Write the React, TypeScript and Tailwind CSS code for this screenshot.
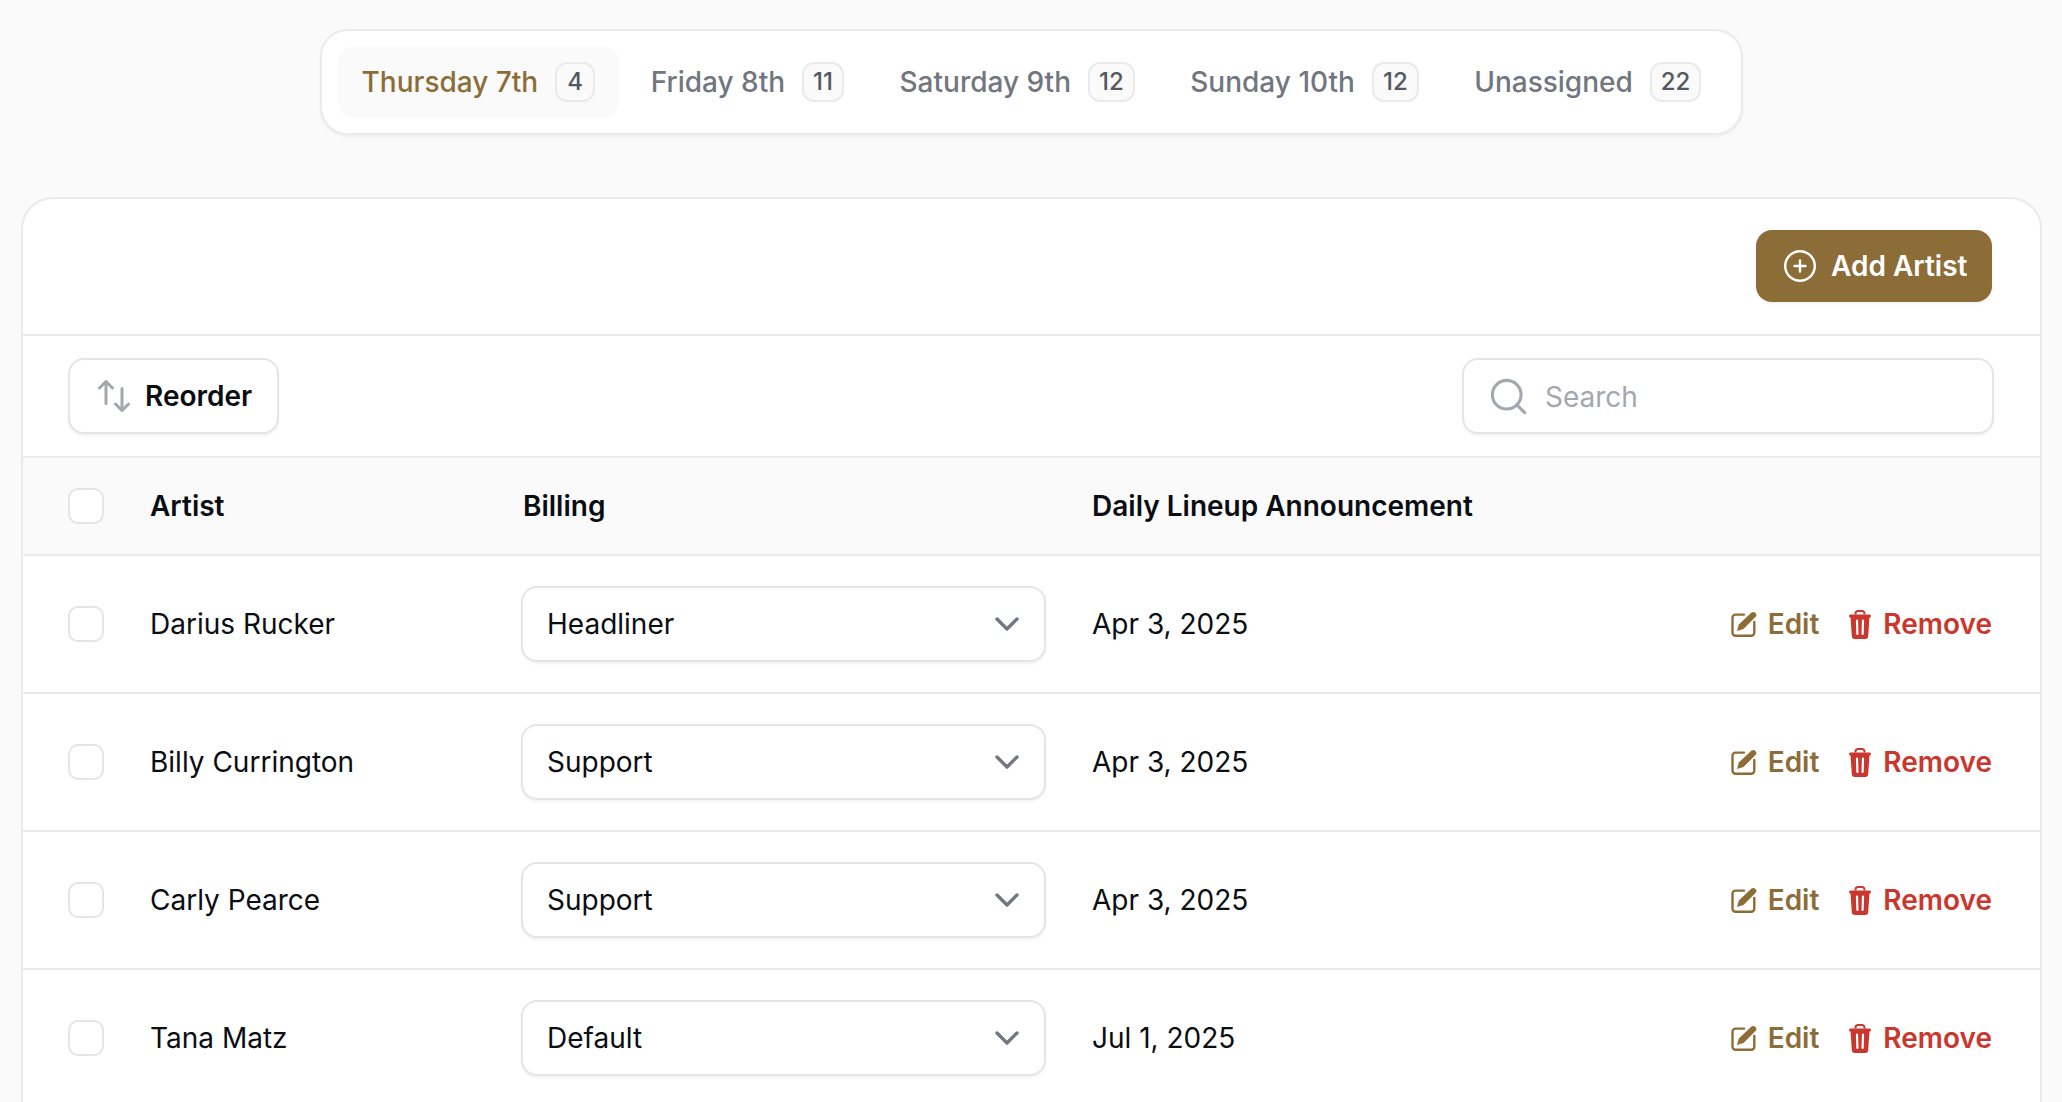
import { ChevronDown, Search } from 'lucide-react'

const tabs = [
  { label: 'Thursday 7th', count: 4, active: true },
  { label: 'Friday 8th', count: 11 },
  { label: 'Saturday 9th', count: 12 },
  { label: 'Sunday 10th', count: 12 },
  { label: 'Unassigned', count: 22 },
]

const artists = [
  { name: 'Darius Rucker', billing: 'Headliner', date: 'Apr 3, 2025' },
  { name: 'Billy Currington', billing: 'Support', date: 'Apr 3, 2025' },
  { name: 'Carly Pearce', billing: 'Support', date: 'Apr 3, 2025' },
  { name: 'Tana Matz', billing: 'Default', date: 'Jul 1, 2025' },
]

function Checkbox() {
  return <span className="block h-[36px] w-[36px] shrink-0 rounded-[10px] border-2 border-[#e4e5e7] bg-white" />
}

function ReorderIcon() {
  return (
    <svg viewBox="0 0 32 32" className="h-[32px] w-[32px] shrink-0" fill="none" stroke="#a4a7ae" strokeWidth="3" strokeLinecap="round" strokeLinejoin="round">
      <path d="M8 1.5v22M1.5 8 8 1.5 14.500 8" />
      <path d="M24 8.500v22M17.500 24l6.500 6.500 6.500-6.500" />
    </svg>
  )
}

function EditIcon() {
  return (
    <svg viewBox="0 0 26 26" className="h-[26px] w-[26px] shrink-0" fill="none">
      <path d="M13 3.600H4.500a3 3 0 0 0-3 3v15.200a3 3 0 0 0 3 3h15.800a3 3 0 0 0 3-3V11" stroke="#8c6d37" strokeWidth="2.400" strokeLinecap="round" />
      <path d="M6 20l1.800-6.500L20.500 1.600a3 3 0 0 1 4.200 4.200L12.500 18z" fill="#8c6d37" />
    </svg>
  )
}

function TrashIcon() {
  return (
    <svg viewBox="0 0 22 29" className="h-[29px] w-[22px] shrink-0">
      <path d="M6.500 4.500V3.500A2.500 2.500 0 0 1 9 1h4a2.500 2.500 0 0 1 2.500 2.500v1" fill="none" stroke="#c9372e" strokeWidth="2" />
      <rect x="0" y="4.500" width="22" height="3" rx="1.500" fill="#c9372e" />
      <path d="M1.500 7h19l-1.300 19a3 3 0 0 1-3 3H5.800a3 3 0 0 1-3-3z" fill="#c9372e" />
      <path d="M8 10.500l.4 13.500M14 10.500l-.4 13.500" fill="none" stroke="white" strokeWidth="2.200" strokeLinecap="round" />
    </svg>
  )
}

function PlusCircleIcon() {
  return (
    <svg viewBox="0 0 32 32" className="h-[32px] w-[32px] shrink-0" fill="none" stroke="white" strokeWidth="2.400" strokeLinecap="round">
      <circle cx="16" cy="16" r="14.800" />
      <path d="M16 10.500v11M10.500 16h11" />
    </svg>
  )
}

export default function App() {
  return (
    <div className="h-[1102px] overflow-hidden bg-[#fafafa] pl-[21px] pr-[20px] pt-[29px] font-['Inter',sans-serif] text-[28px] text-[#0a0d12]">
      <div className="flex justify-center">
        <div className="flex h-[106px] items-center gap-[7.5px] rounded-[28px] border-2 border-[#ebebec] bg-white px-[16px] shadow-[0_2px_3px_rgba(10,13,18,0.05)]">
          {tabs.map((tab) => (
            <div
              key={tab.label}
              className={`flex h-[72px] items-center gap-[17px] rounded-[16px] px-[24px] font-medium ${tab.active ? 'bg-[#fafafa] text-[#8c6d37]' : 'text-[#717680]'}`}
            >
              {tab.label}
              <span className="flex h-[40px] min-w-[40px] items-center justify-center rounded-[12px] border-2 border-[#e9eaeb] bg-[#fafafa] px-[9px] text-[24px] font-medium text-[#535862]">
                {tab.count}
              </span>
            </div>
          ))}
        </div>
      </div>

      <section className="mt-[62px] rounded-t-[32px] border-2 border-[#ebebec] bg-white">
        <div className="flex h-[137px] items-start justify-end border-b-2 border-[#e9eaeb] pr-[48px] pt-[31px]">
          <button className="flex h-[72px] w-[236px] items-center gap-[15px] rounded-[16px] bg-[#8c6d37] pl-[28px] font-semibold text-white shadow-[0_2px_3px_rgba(10,13,18,0.05)]">
            <PlusCircleIcon />
            Add Artist
          </button>
        </div>

        <div className="flex h-[122px] items-center justify-between border-b-2 border-[#e9eaeb] pl-[45px] pr-[46px]">
          <button className="flex h-[76px] w-[211px] items-center gap-[15px] rounded-[16px] border-2 border-[#e4e5e7] bg-white pl-[28px] font-semibold shadow-[0_2px_3px_rgba(10,13,18,0.05)]">
            <ReorderIcon />
            Reorder
          </button>
          <div className="flex h-[76px] w-[532px] items-center gap-[15px] rounded-[16px] border-2 border-[#e4e5e7] bg-white pl-[23px] shadow-[0_2px_3px_rgba(10,13,18,0.05)]">
            <Search className="h-[43px] w-[43px] shrink-0 text-[#a4a7ae]" strokeWidth={1.7} />
            <input placeholder="Search" className="min-w-0 flex-1 bg-transparent pt-[2px] outline-none placeholder:text-[#a4a7ae]" />
          </div>
        </div>

        <div className="flex h-[98px] items-center border-b-2 border-[#e9eaeb] bg-[#fafafa] pl-[45px] font-semibold">
          <Checkbox />
          <div className="ml-[46px] w-[373px]">Artist</div>
          <div className="w-[569px]">Billing</div>
          <div>Daily Lineup Announcement</div>
        </div>

        {artists.map((artist) => (
          <div key={artist.name} className="flex h-[138px] items-center border-b-2 border-[#e9eaeb] pl-[45px] pr-[48px]">
            <Checkbox />
            <div className="ml-[46px] w-[371px]">{artist.name}</div>
            <button className="flex h-[76px] w-[525px] items-center justify-between rounded-[16px] border-2 border-[#e4e5e7] bg-white pl-[24px] pr-[17px] shadow-[0_2px_3px_rgba(10,13,18,0.05)]">
              {artist.billing}
              <ChevronDown className="h-[40px] w-[40px] text-[#717680]" strokeWidth={2} />
            </button>
            <div className="ml-[46px]">{artist.date}</div>
            <div className="ml-auto flex items-center gap-[30px] font-semibold">
              <span className="flex items-center gap-[11px] text-[#8c6d37]">
                <EditIcon />
                Edit
              </span>
              <span className="flex items-center gap-[12px] text-[#c9372e]">
                <TrashIcon />
                Remove
              </span>
            </div>
          </div>
        ))}
      </section>
    </div>
  )
}
